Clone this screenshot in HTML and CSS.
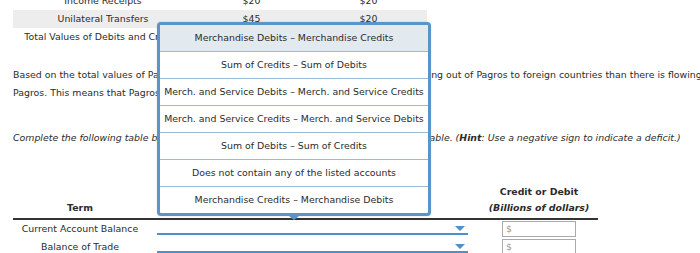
FILE: index.html
```html
<!DOCTYPE html>
<html lang="en">
<head>
    <meta charset="utf-8">
    <link rel="stylesheet" href="styles.css">
</head>
<body>

<div class="page">

    <!-- totals table -->
    <div class="totals">
        <div class="row">
            <span class="name">Income Receipts</span><span>$20</span><span>$20</span>
        </div>
        <div class="row shade">
            <span class="name">Unilateral Transfers</span><span>$45</span><span>$20</span>
        </div>
        <div class="row">
            <span class="name">Total Values of Debits and Credits</span><span>$1,215</span><span>$1,385</span>
        </div>
    </div>

    <p class="text">Based on the total values of Pagros's overall debts and credits, there's more money flowing out of Pagros to foreign countries than there is flowing into</p>
    <p class="text">Pagros. This means that Pagros has a current account deficit.</p>

    <p class="text note">Complete the following table by filling in the appropriate formulas and values for every table. (<b>Hint</b>: Use a negative sign to indicate a deficit.)</p>

    <!-- terms table -->
    <div class="terms">
        <div class="head">
            <span class="term">Term</span>
            <span class="blank"></span>
            <span class="value">Credit or Debit<br><i>(Billions of dollars)</i></span>
        </div>
        <div class="line">
            <span class="term">Current Account Balance</span>
            <span class="select"><span class="caret"></span></span>
            <span class="value"><span class="money">$</span></span>
        </div>
        <div class="line">
            <span class="term">Balance of Trade</span>
            <span class="select"><span class="caret"></span></span>
            <span class="value"><span class="money">$</span></span>
        </div>
    </div>

    <!-- open dropdown menu -->
    <ul class="menu">
        <li class="active">Merchandise Debits &ndash; Merchandise Credits</li>
        <li>Sum of Credits &ndash; Sum of Debits</li>
        <li>Merch. and Service Debits &ndash; Merch. and Service Credits</li>
        <li>Merch. and Service Credits &ndash; Merch. and Service Debits</li>
        <li>Sum of Debits &ndash; Sum of Credits</li>
        <li>Does not contain any of the listed accounts</li>
        <li>Merchandise Credits &ndash; Merchandise Debits</li>
    </ul>

</div>

</body>
</html>
```

FILE: styles.css
```css
* {
    box-sizing: border-box;
}

body {
    margin: 0;
    overflow: hidden;
    font-family: "DejaVu Sans", Verdana, sans-serif;
    font-size: 9.4px;
    color: #2b2b2b;
    background: #fff;
}

/* flow-root keeps the negative top margin of the table inside the page */
.page {
    position: relative;
    display: flow-root;
    padding: 0 13px;
}

/* totals table */
.totals {
    margin-top: -8px;
    width: 414px;
}

.totals .row {
    display: grid;
    grid-template-columns: 180px 117px 117px;
    height: 18px;
    line-height: 18px;
    text-align: center;
}

.totals .shade {
    background: #ededed;
}

/* paragraphs */
.text {
    margin: 0;
    line-height: 18px;
    white-space: nowrap;
}

.totals + .text {
    margin-top: 20px;
}

.note {
    margin-top: 27px;
    font-style: italic;
}

/* terms table */
.terms {
    margin-top: 37px;
    width: 585px;
}

.terms .head,
.terms .line {
    display: grid;
    grid-template-columns: 134px 321px 130px;
}

.terms .head {
    align-items: end;
    line-height: 16px;
    font-weight: bold;
    border-bottom: 2px solid #333;
    padding-bottom: 2px;
}

.terms .term {
    text-align: center;
}

.terms .value {
    text-align: center;
    padding-left: 12px;
}

.terms .line {
    height: 18px;
    line-height: 18px;
}

.select {
    margin-left: 10px;
    height: 15px;
    border-bottom: 2px solid #4d90cb;
    display: flex;
    justify-content: flex-end;
    align-items: center;
    padding-right: 3px;
}

.caret {
    width: 0;
    height: 0;
    border-left: 5px solid transparent;
    border-right: 5px solid transparent;
    border-top: 5px solid #4d90cb;
    margin-top: 3px;
}

.money {
    display: block;
    width: 74px;
    height: 16px;
    margin: 1px auto 0;
    padding-left: 3px;
    border: 1px solid #aaa;
    line-height: 14px;
    text-align: left;
    color: #999;
}

/* open dropdown menu */
.menu {
    position: absolute;
    left: 157px;
    top: 22px;
    width: 274px;
    margin: 0;
    padding: 0;
    list-style: none;
    background: #fff;
    border: 3px solid #5a95c9;
    border-radius: 4px;
    box-shadow: 0 0 2px rgba(0, 0, 0, 0.15);
}

.menu li {
    height: 27px;
    line-height: 26px;
    text-align: center;
    border-bottom: 1px solid #9bbad7;
    white-space: nowrap;
}

.menu li:last-child {
    height: 26px;
    border-bottom: 0;
}

.menu .active {
    background: #e2e9ef;
}

.menu::after {
    content: "";
    position: absolute;
    left: 50%;
    bottom: -7px;
    margin-left: -5px;
    border-left: 5px solid transparent;
    border-right: 5px solid transparent;
    border-top: 4px solid #5a95c9;
}
```
